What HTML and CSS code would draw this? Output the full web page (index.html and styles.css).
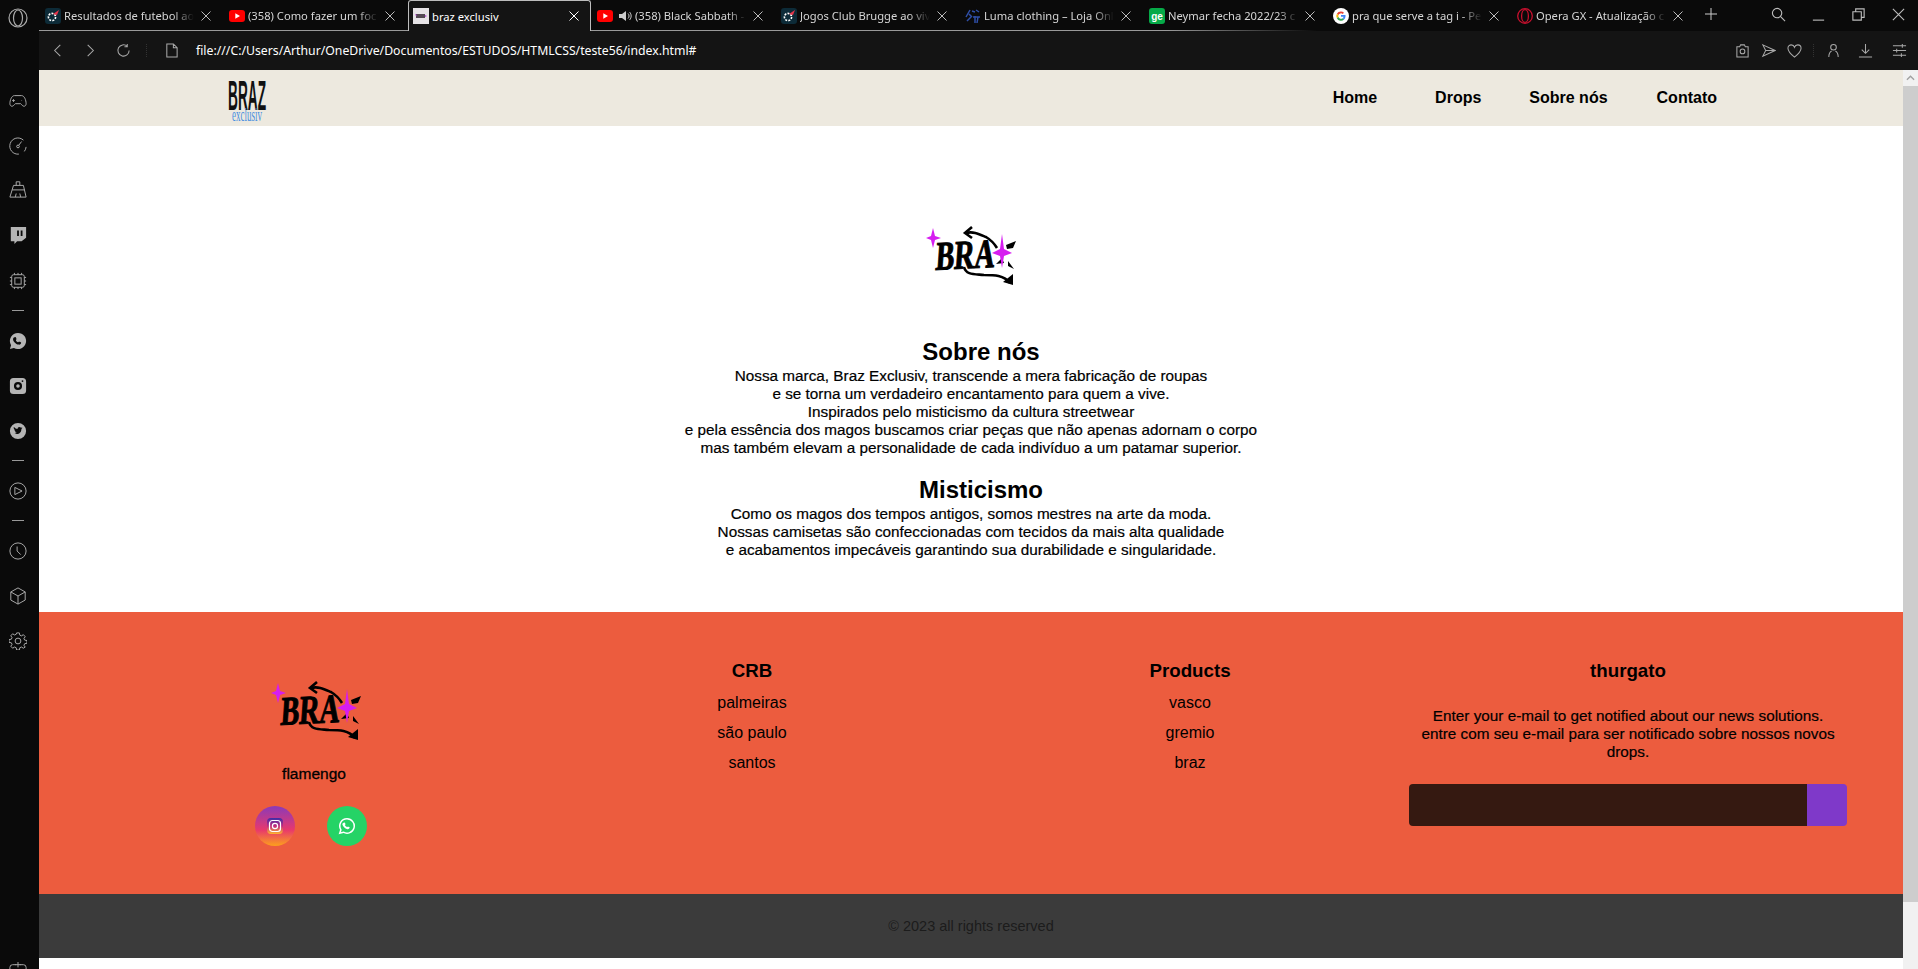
FILE: index.html
```html
<!DOCTYPE html>
<html lang="pt-BR">
<head>
    <meta charset="UTF-8">
    <meta name="viewport" content="width=device-width, initial-scale=1.0">
    <title>braz exclusiv</title>
    <link rel="stylesheet" href="styles.css">
</head>
<body>

    <svg class="defs" width="0" height="0">
        <defs>
            <linearGradient id="igFill" x1="0" y1="0" x2="0" y2="1">
                <stop offset="0" stop-color="#3b2fa8"/>
                <stop offset=".5" stop-color="#c02a80"/>
                <stop offset="1" stop-color="#ffb52e"/>
            </linearGradient>
        </defs>
        <symbol id="closeX" viewBox="0 0 10 10"><path d="M.5.5l9 9M9.500.5l-9 9"/></symbol>
        <symbol id="brazMark" viewBox="0 0 90 62">
            <g transform="translate(9 45) rotate(-3) skewX(-7) scale(1 1.500)">
                <text class="mark-text" x="0" y="0" textLength="59" lengthAdjust="spacingAndGlyphs">BRA</text>
            </g>
            <path d="M40 8 C47 6 53 9 60 12 C65 15 68 18 71 23" class="mark-line"/>
            <path d="M46 2 L39 8 L46 13" class="mark-line"/>
            <path d="M38 42 C40 50 48 49 58 50 C68 50 78 50 84 58" class="mark-line"/>
            <path d="M87 49 L87 60 L77 57 Z"/>
            <path d="M80 20 L90 16 L87 23 L81 24 Z M70 39 L76 33 L78 38 Z M82 36 L88 44 L82 41 Z"/>
            <path class="mark-star" d="M7 3 L9 11 L15 13 L9 15 L7 23 L5 15 L0 13 L5 11 Z"/>
            <path class="mark-star" d="M76 9 L78 24 L86 28 L78 31 L76 43 L74 31 L66 28 L74 24 Z"/>
        </symbol>
    </svg>

    <div class="tabstrip">
        <svg class="opera-logo" viewBox="0 0 20 20"><ellipse cx="10" cy="10" rx="9" ry="9"/><ellipse cx="10" cy="10" rx="4.500" ry="8"/></svg>
        <div class="tab">
            <svg class="favicon" viewBox="0 0 16 16"><rect width="16" height="16" rx="3" fill="#0d2b38"/><circle cx="7" cy="9" r="3.600" fill="none" stroke="#fff" stroke-width="1.600" stroke-dasharray="2 1.200"/><path d="M8 6l6-4-2 5z" fill="#e8344a"/></svg>
            <span class="tab-title">Resultados de futebol ao</span><svg class="tab-close"><use href="#closeX"/></svg>
        </div>
        <div class="tab">
            <svg class="favicon" viewBox="0 0 16 16"><rect y="2" width="16" height="12" rx="3" fill="#f00"/><path d="M6.300 5.200v5.600L11 8z" fill="#fff"/></svg>
            <span class="tab-title">(358) Como fazer um foc</span><svg class="tab-close"><use href="#closeX"/></svg>
        </div>
        <div class="tab tab-active">
            <svg class="favicon" viewBox="0 0 16 16"><rect width="16" height="16" fill="#e6e3e6"/><rect x="3" y="6" width="9" height="4" fill="#554a55"/><path d="M2 6l2 1-1 1zM12 7l2 1-2 1z" fill="#b23cd6"/></svg>
            <span class="tab-title">braz exclusiv</span><svg class="tab-close"><use href="#closeX"/></svg>
        </div>
        <div class="tab">
            <svg class="favicon" viewBox="0 0 16 16"><rect y="2" width="16" height="12" rx="3" fill="#f00"/><path d="M6.300 5.200v5.600L11 8z" fill="#fff"/></svg>
            <svg class="speaker" viewBox="0 0 14 14"><path d="M1 5h3l4-3v10L4 9H1z" fill="#ccc"/><path d="M10 4.500c1.400 1.400 1.400 3.600 0 5M11.500 3c2.200 2.200 2.200 5.800 0 8" fill="none" stroke="#ccc"/></svg>
            <span class="tab-title">(358) Black Sabbath -</span><svg class="tab-close"><use href="#closeX"/></svg>
        </div>
        <div class="tab">
            <svg class="favicon" viewBox="0 0 16 16"><rect width="16" height="16" rx="3" fill="#0d2b38"/><circle cx="7" cy="9" r="3.600" fill="none" stroke="#fff" stroke-width="1.600" stroke-dasharray="2 1.200"/><path d="M8 6l6-4-2 5z" fill="#e8344a"/></svg>
            <span class="tab-title">Jogos Club Brugge ao viv</span><svg class="tab-close"><use href="#closeX"/></svg>
        </div>
        <div class="tab">
            <svg class="favicon" viewBox="0 0 16 16"><path d="M1 9l4-7M4 6l3 3M7 3l3 1M11 2l3 2M8 9h7M10 8v7M13 9l-1 6M2 13l4-4" fill="none" stroke="#2f4fa8" stroke-width="1.500"/></svg>
            <span class="tab-title">Luma clothing – Loja Onl</span><svg class="tab-close"><use href="#closeX"/></svg>
        </div>
        <div class="tab">
            <svg class="favicon" viewBox="0 0 16 16"><rect width="16" height="16" rx="3" fill="#06aa48"/><text x="8" y="11.500" class="ge-text">ge</text></svg>
            <span class="tab-title">Neymar fecha 2022/23 c</span><svg class="tab-close"><use href="#closeX"/></svg>
        </div>
        <div class="tab">
            <svg class="favicon" viewBox="0 0 16 16"><circle cx="8" cy="8" r="8" fill="#fff"/><path d="M8 3.500a4.500 4.500 0 0 1 3 1.200L9.700 6A2.700 2.700 0 0 0 5.500 7L3.900 5.800A4.500 4.500 0 0 1 8 3.500z" fill="#ea4335"/><path d="M3.900 5.800L5.500 7a2.800 2.800 0 0 0 0 2L3.900 10.200a4.500 4.500 0 0 1 0-4.400z" fill="#fbbc05"/><path d="M3.900 10.200L5.500 9a2.700 2.700 0 0 0 4.100 1.300l1.500 1.200A4.500 4.500 0 0 1 3.900 10.200z" fill="#34a853"/><path d="M12.500 7H8v1.800h2.600a2.300 2.300 0 0 1-1 1.500l1.500 1.200C12 10.700 12.700 9 12.500 7z" fill="#4285f4"/></svg>
            <span class="tab-title">pra que serve a tag i - Pe</span><svg class="tab-close"><use href="#closeX"/></svg>
        </div>
        <div class="tab">
            <svg class="favicon" viewBox="0 0 16 16"><ellipse cx="8" cy="8" rx="7.300" ry="7.300" fill="none" stroke="#c9102e" stroke-width="1.300"/><ellipse cx="8" cy="8" rx="3.400" ry="6.400" fill="none" stroke="#c9102e" stroke-width="1.300"/></svg>
            <span class="tab-title">Opera GX - Atualização c</span><svg class="tab-close"><use href="#closeX"/></svg>
        </div>
        <svg class="new-tab" viewBox="0 0 12 12"><path d="M6 0v12M0 6h12"/></svg>
        <div class="window-btns">
            <svg class="win-search" viewBox="0 0 16 16"><circle cx="6.500" cy="6.500" r="5"/><path d="M10 10l5 5"/></svg>
            <svg class="win-min" viewBox="0 0 16 16"><path d="M2 14h12"/></svg>
            <svg class="win-restore" viewBox="0 0 16 16"><path d="M2 5h9v9H2zM5 5V2h9v9h-3"/></svg>
            <svg class="win-close" viewBox="0 0 16 16"><path d="M2 2l12 12M14 2L2 14"/></svg>
        </div>
    </div>

    <div class="workspace">
        <div class="sidebar">
            <div class="side-item"><svg viewBox="0 0 20 20"><path d="M6 4h8c3 0 5 5 5 9 0 3-3 4-5 1l-1-1H7l-1 1c-2 3-5 2-5-1 0-4 2-9 5-9zM5 8v3M3.500 9.500h3M14 9.500h.5"/></svg></div>
            <div class="side-item"><svg viewBox="0 0 20 20"><path d="M16 3.500A9 9 0 1 0 11 19M19 11a9 9 0 0 1-2 5M14 5l-3 4"/><circle cx="10" cy="10.500" r="1.500"/></svg></div>
            <div class="side-item side-broom"><svg viewBox="0 0 20 20"><path d="M8 6V2h4v4M5 6h11l3 13H1zM3.500 11h14M7 19l1-4M13 19l-1-4"/></svg></div>
            <div class="side-item side-twitch"><svg viewBox="0 0 20 20" class="side-fill"><path d="M2 1h17v12l-5 4H9l-3 3v-3H2zM9 5v6h2V5zM13 5v6h2V5z" fill-rule="evenodd"/></svg></div>
            <div class="side-item"><svg viewBox="0 0 20 20"><rect x="3" y="3" width="14" height="14" rx="2"/><rect x="6.500" y="6.500" width="7" height="7"/><path d="M6 1v2M10 1v2M14 1v2M6 17v2M10 17v2M14 17v2M1 6h2M1 10h2M1 14h2M17 6h2M17 10h2M17 14h2"/></svg></div>
            <div class="side-sep"></div>
            <div class="side-item"><svg viewBox="0 0 20 20" class="side-fill"><path d="M10 1a9 9 0 0 0-7.700 13.600L1 19l4.500-1.200A9 9 0 1 0 10 1zM7 5.500c1 0 1.500 2.500 1 3-.5.500-.5 1 .5 2s1.500 1 2 .5c.5-.5 3 0 3 1s-1 2.500-3 2c-3-.5-6-3.500-6-6 0-1.500 1.500-2.500 2.500-2.500z" fill-rule="evenodd"/></svg></div>
            <div class="side-item"><svg viewBox="0 0 20 20" class="side-fill"><path d="M5 1h10a4 4 0 0 1 4 4v10a4 4 0 0 1-4 4H5a4 4 0 0 1-4-4V5a4 4 0 0 1 4-4zM10 5.500a4.500 4.500 0 1 0 0 9 4.500 4.500 0 0 0 0-9zM10 8a2 2 0 1 1 0 4 2 2 0 0 1 0-4zM15 3.500a1 1 0 1 0 0 2 1 1 0 0 0 0-2z" fill-rule="evenodd"/></svg></div>
            <div class="side-item"><svg viewBox="0 0 20 20" class="side-fill"><path d="M10 1a9 9 0 1 0 0 18 9 9 0 0 0 0-18zM15 6.500l-1.200 1.300c0 4-3 6.700-7.800 5.200 1.200 0 2-.3 2.800-1-1 0-1.800-.5-2.300-1.500h1.200c-1.200-.4-1.800-1.300-1.900-2.400l1.100.3C5 7.500 4.900 6.300 5.500 5.500c1.200 1.400 2.500 2.100 4 2.200-.2-2 2.300-3 3.500-1.500z" fill-rule="evenodd"/></svg></div>
            <div class="side-sep"></div>
            <div class="side-item"><svg viewBox="0 0 20 20"><circle cx="10" cy="10" r="9"/><path d="M6.500 6l8 4-8 4z"/></svg></div>
            <div class="side-sep"></div>
            <div class="side-item"><svg viewBox="0 0 20 20"><circle cx="10" cy="10" r="9"/><path d="M9 5v5l4 4"/></svg></div>
            <div class="side-item"><svg viewBox="0 0 20 20"><path d="M10 1l8 4.500v9L10 19l-8-4.500v-9zM2 5.500l8 4.500 8-4.500M10 10v9"/></svg></div>
            <div class="side-item"><svg viewBox="0 0 20 20"><circle cx="10" cy="10" r="3.200"/><path d="M8.500 1h3l.5 2.500 1.800.8L16 3l2 2.200-1.400 2 .8 1.800 2.600.5v3l-2.600.5-.8 1.800 1.400 2L16 18l-2.200-1.300-1.800.8-.5 2.500h-3l-.5-2.500-1.800-.8L4 18l-2-2.200 1.400-2-.8-1.800L0 11.500v-3L2.600 8l.8-1.800-1.400-2L4 2l2.200 1.300L8 2.500z"/></svg></div>
            <div class="side-item side-last"><svg viewBox="0 0 20 20"><path d="M4 3h4M12 3h4a3 3 0 0 1 3 3v9H1V6a3 3 0 0 1 3-3M10 0v6M7 3h6M6 8v3M10 8v3M14 8v3"/></svg></div>
        </div>

        <div class="browser">
            <div class="toolbar">
                <svg class="tool-icon tool-back" viewBox="0 0 16 16"><path d="M11 2L5 8l6 6"/></svg>
                <svg class="tool-icon tool-forward" viewBox="0 0 16 16"><path d="M5 2l6 6-6 6"/></svg>
                <svg class="tool-icon tool-reload" viewBox="0 0 16 16"><path d="M14 8a6 6 0 1 1-2-4.500M12 1v3H9"/></svg>
                <span class="tool-dots tool-dots-left"></span>
                <svg class="tool-icon tool-doc" viewBox="0 0 16 16"><path d="M3 1h7l4 4v10H3zM10 1v4h4"/></svg>
                <span class="url">file:///C:/Users/Arthur/OneDrive/Documentos/ESTUDOS/HTMLCSS/teste56/index.html#</span>
                <div class="tool-right">
                    <svg class="tool-icon" viewBox="0 0 16 16"><path d="M2 4h3l1-2h4l1 2h3v11H2z"/><circle cx="8" cy="9" r="2.500"/></svg>
                    <svg class="tool-icon" viewBox="0 0 16 16"><path d="M2 2l13 6-13 6 3-6zM5 8h10"/></svg>
                    <svg class="tool-icon" viewBox="0 0 16 16"><path d="M8 15C3 11 1 8 1 5.500 1 3 3 2 4.500 2 6 2 7.500 3 8 4.500 8.500 3 10 2 11.500 2 13 2 15 3 15 5.500 15 8 13 11 8 15z"/></svg>
                    <span class="tool-dots"></span>
                    <svg class="tool-icon tool-person" viewBox="0 0 16 16"><circle cx="8" cy="4.500" r="3"/><path d="M3 15c0-4 2-6 3-6.500M13 15c0-4-2-6-3-6.500"/></svg>
                    <svg class="tool-icon tool-down" viewBox="0 0 16 16"><path d="M8 1v10M4 7l4 4 4-4M1 15h14"/></svg>
                    <svg class="tool-icon tool-sliders" viewBox="0 0 16 16"><path d="M1 3h14M1 8h14M1 13h14M11 1v4M5 6v4M10 11v4"/></svg>
                </div>
            </div>

            <div class="viewport">
                <div class="page">
                    <header class="site-header">
                        <svg class="site-logo" viewBox="0 0 38 49">
                            <text class="logo-braz" transform="translate(0 35) scale(1 2.700)" textLength="38" lengthAdjust="spacingAndGlyphs">BRAZ</text>
                            <text class="logo-exclusiv" transform="translate(4 46) scale(1 1.300)" textLength="30" lengthAdjust="spacingAndGlyphs">exclusiv</text>
                        </svg>
                        <nav class="site-nav">
                            <a href="#" class="nav-home">Home</a>
                            <a href="#" class="nav-drops">Drops</a>
                            <a href="#" class="nav-sobre">Sobre nós</a>
                            <a href="#">Contato</a>
                        </nav>
                    </header>

                    <main class="about">
                        <svg class="about-logo"><use href="#brazMark"/></svg>
                        <h2>Sobre nós</h2>
                        <p>Nossa marca, Braz Exclusiv, transcende a mera fabricação de roupas<br>
                        e se torna um verdadeiro encantamento para quem a vive.<br>
                        Inspirados pelo misticismo da cultura streetwear<br>
                        e pela essência dos magos buscamos criar peças que não apenas adornam o corpo<br>
                        mas também elevam a personalidade de cada indivíduo a um patamar superior.</p>
                        <h2 class="about-second">Misticismo</h2>
                        <p>Como os magos dos tempos antigos, somos mestres na arte da moda.<br>
                        Nossas camisetas são confeccionadas com tecidos da mais alta qualidade<br>
                        e acabamentos impecáveis garantindo sua durabilidade e singularidade.</p>
                    </main>

                    <footer class="site-footer">
                        <div class="footer-grid">
                            <div class="footer-brand">
                                <svg class="footer-logo"><use href="#brazMark"/></svg>
                                <p class="footer-name">flamengo</p>
                                <div class="social">
                                    <span class="social-btn social-ig">
                                        <svg viewBox="0 0 16 16"><rect x="0" y="0" width="16" height="16" rx="4" fill="url(#igFill)"/><rect x="2.500" y="2.500" width="11" height="11" rx="3" class="ig-inner"/><circle cx="8" cy="8" r="2.600" class="ig-inner"/></svg>
                                    </span>
                                    <span class="social-btn social-wa">
                                        <svg viewBox="0 0 20 20"><path d="M10 2a8 8 0 0 0-6.800 12.200L2 18l4-1.100A8 8 0 1 0 10 2z" class="wa-ring"/><path d="M7.200 6c.8 0 1.300 2 .9 2.500-.4.500-.4.800.6 1.800s1.300 1 1.800.6c.5-.4 2.500.1 2.500.9s-1 2-2.600 1.700c-2.700-.5-5.200-3-5.600-5.400C4.600 7 6.300 6 7.200 6z" class="wa-phone"/></svg>
                                    </span>
                                </div>
                            </div>
                            <div class="footer-col">
                                <h3>CRB</h3>
                                <ul>
                                    <li><a href="#">palmeiras</a></li>
                                    <li><a href="#">são paulo</a></li>
                                    <li><a href="#">santos</a></li>
                                </ul>
                            </div>
                            <div class="footer-col">
                                <h3>Products</h3>
                                <ul>
                                    <li><a href="#">vasco</a></li>
                                    <li><a href="#">gremio</a></li>
                                    <li><a href="#">braz</a></li>
                                </ul>
                            </div>
                            <div class="footer-col">
                                <h3>thurgato</h3>
                                <p class="footer-news">Enter your e-mail to get notified about our news solutions.<br>entre com seu e-mail para ser notificado sobre nossos novos drops.</p>
                                <form class="news-form">
                                    <input type="text" class="news-input">
                                    <button type="button" class="news-btn"></button>
                                </form>
                            </div>
                        </div>
                    </footer>

                    <div class="copyright">
                        <p>© 2023 all rights reserved</p>
                    </div>
                </div>

                <div class="scrollbar">
                    <div class="scroll-up"><svg viewBox="0 0 10 6"><path d="M1 5l4-4 4 4"/></svg></div>
                    <div class="scroll-thumb"></div>
                </div>
            </div>
        </div>
    </div>

</body>
</html>
```

FILE: styles.css
```css
* {
    box-sizing: border-box;
}
html, body {
    height: 100%;
}
body {
    margin: 0;
    overflow: hidden;
    background: #0a0a0a;
    font-family: "Liberation Sans", Arial, sans-serif;
    color: #000;
}
.defs {
    position: absolute;
}

/* browser chrome */
.tabstrip {
    display: flex;
    align-items: center;
    height: 31px;
    padding-left: 41px;
    background: #0a0a0a;
    position: relative;
}
.tabstrip::after {
    content: "";
    position: absolute;
    left: 39px;
    right: 0;
    bottom: 0;
    height: 1px;
    background: linear-gradient(90deg, #9a9a9a 0%, #9a9a9a 60%, #0a0a0a 68%);
}
.opera-logo {
    position: absolute;
    left: 8px;
    top: 8px;
    width: 20px;
    height: 20px;
    fill: none;
    stroke: #aaa;
    stroke-width: 1.2;
}
.tab {
    display: flex;
    align-items: center;
    flex: 0 0 184px;
    min-width: 0;
    height: 31px;
    padding-left: 4px;
    font-family: "Noto Sans", sans-serif;
    font-size: 11.200px;
    color: #d6d6d6;
}
.tab-active {
    position: relative;
    z-index: 1;
    flex-basis: 183px;
    margin: 0 2px 0 -1px;
    padding-left: 4px;
    background: #141414;
    color: #fff;
    border: 1px solid #bdbdbd;
    border-bottom: none;
    border-radius: 3px 3px 0 0;
}
.favicon {
    width: 16px;
    height: 16px;
    flex: none;
    margin-right: 3px;
}
.speaker {
    width: 14px;
    height: 14px;
    flex: none;
    margin: 0 3px 0 2px;
}
.ge-text {
    font: bold 10px "Liberation Sans", sans-serif;
    fill: #fff;
    text-anchor: middle;
}
.tab-title {
    flex: 1;
    min-width: 0;
    overflow: hidden;
    white-space: nowrap;
    -webkit-mask-image: linear-gradient(90deg, #000 84%, transparent 100%);
    mask-image: linear-gradient(90deg, #000 84%, transparent 100%);
}
.tab-active .tab-title {
    -webkit-mask-image: none;
    mask-image: none;
}
.tab-close {
    flex: none;
    width: 10px;
    height: 10px;
    margin: 0 14px 0 7px;
    fill: none;
    stroke: #bbb;
    stroke-width: 1;
}
.tab-active .tab-close {
    margin-right: 11px;
    stroke: #fff;
}
.new-tab {
    flex: none;
    width: 12px;
    height: 12px;
    margin: -4px 0 0 8px;
    fill: none;
    stroke: #ccc;
    stroke-width: 1;
}
.window-btns {
    margin-left: auto;
    display: flex;
    align-items: center;
    height: 31px;
    padding-right: 12px;
}
.window-btns svg {
    width: 15px;
    height: 15px;
    fill: none;
    stroke: #bbb;
    stroke-width: 1.2;
    margin-top: -2px;
    margin-left: 25px;
}

.workspace {
    display: flex;
    height: calc(100% - 31px);
}
.sidebar {
    flex: 0 0 39px;
    padding-top: 47px;
    padding-right: 3px;
    background: #0a0a0a;
    overflow: hidden;
}
.side-item {
    display: flex;
    align-items: center;
    justify-content: center;
    height: 45px;
}
.side-item svg {
    width: 18px;
    height: 18px;
    fill: none;
    stroke: #a8a8a8;
    stroke-width: 1.1;
}
.side-item svg.side-fill {
    fill: #b4b4b4;
    stroke: none;
}
.side-twitch svg {
    margin-top: -2px;
}
.side-broom svg {
    margin-top: -3px;
}
.side-last {
    margin-top: 285px;
}
.side-sep {
    width: 12px;
    height: 15px;
    margin: 0 auto;
    border-bottom: 1px solid #999;
    transform: translateY(-7px);
}

.browser {
    flex: 1;
    min-width: 0;
    display: flex;
    flex-direction: column;
}
.toolbar {
    display: flex;
    align-items: center;
    flex: 0 0 39px;
    background: #141414;
}
.tool-icon {
    width: 15px;
    height: 15px;
    flex: none;
    fill: none;
    stroke: #a9a9a9;
    stroke-width: 1.1;
}
.tool-back {
    margin-left: 11px;
}
.tool-forward {
    margin-left: 18px;
}
.tool-reload {
    margin-left: 18px;
}
.tool-dots {
    width: 1px;
    height: 13px;
    flex: none;
    border-left: 1px dotted #333;
}
.tool-dots-left {
    margin-left: 15px;
}
.tool-doc {
    margin-left: 17px;
}
.url {
    margin-left: 17px;
    font-family: "Noto Sans", sans-serif;
    font-size: 12.250px;
    color: #fff;
    white-space: nowrap;
}
.tool-right {
    margin-left: auto;
    display: flex;
    align-items: center;
    gap: 11px;
    padding-right: 11px;
}
.tool-person {
    margin-left: 1px;
}
.tool-down {
    margin-left: 6px;
}
.tool-sliders {
    margin-left: 8px;
}

.viewport {
    flex: 1;
    min-height: 0;
    display: flex;
}
.page {
    flex: 1;
    min-width: 0;
    background: #fff;
}
.scrollbar {
    flex: 0 0 15px;
    background: #f1f1f1;
}
.scroll-up {
    display: flex;
    align-items: center;
    justify-content: center;
    height: 16px;
}
.scroll-up svg {
    width: 9px;
    height: 6px;
    fill: none;
    stroke: #a0a0a0;
    stroke-width: 1.500;
}
.scroll-thumb {
    height: 816px;
    background: #cdcdcd;
}

/* site header */
.site-header {
    display: flex;
    align-items: center;
    justify-content: space-between;
    height: 56px;
    padding: 0 186px 0 189px;
    background: #ede9df;
}
.site-logo {
    width: 38px;
    height: 49px;
    margin-top: 3px;
    overflow: visible;
}
.logo-braz {
    font-family: "Liberation Sans", sans-serif;
    font-weight: bold;
    font-size: 16px;
    fill: #111;
}
.logo-exclusiv {
    font-family: "Liberation Serif", serif;
    font-size: 14px;
    fill: #4a90e0;
}
.site-nav {
    display: flex;
}
.site-nav a {
    font-weight: bold;
    font-size: 16px;
    color: #000;
    text-decoration: none;
}
.nav-home {
    margin-right: 58px;
}
.nav-drops {
    margin-right: 48px;
}
.nav-sobre {
    margin-right: 49px;
}

/* about */
.about {
    display: flex;
    flex-direction: column;
    align-items: center;
    height: 486px;
    padding-top: 99px;
    text-align: center;
}
.about-logo {
    width: 90px;
    height: 62px;
    margin-bottom: 51px;
}
.about h2 {
    margin: 0;
    padding-left: 20px;
    font-size: 24px;
    line-height: 28px;
}
.about p {
    margin: 1px 0 0;
    font-size: 15.300px;
    line-height: 18px;
    -webkit-text-stroke: .2px #000;
}
.about .about-second {
    margin-top: 19px;
}
.mark-text {
    font-family: "Liberation Serif", serif;
    font-weight: bold;
    font-size: 27px;
    fill: #000;
    stroke: #000;
    stroke-width: .7;
}
.mark-line {
    fill: none;
    stroke: #000;
    stroke-width: 2.600;
}
.mark-star {
    fill: #d61df0;
}

/* footer */
.site-footer {
    height: 282px;
    padding: 47px 56px 0;
    background: #ec5c3e;
}
.footer-grid {
    display: grid;
    grid-template-columns: repeat(4, 1fr);
    text-align: center;
}
.footer-brand {
    display: flex;
    flex-direction: column;
    align-items: center;
}
.footer-logo {
    width: 90px;
    height: 62px;
    margin-top: 21px;
    margin-left: 4px;
}
.footer-name {
    margin: 23px 0 0;
    font-size: 15.500px;
    line-height: 18px;
    -webkit-text-stroke: .3px #000;
}
.social {
    display: flex;
    gap: 32px;
    margin-top: 23px;
    margin-left: -6px;
}
.social-btn {
    display: flex;
    align-items: center;
    justify-content: center;
    width: 40px;
    height: 40px;
    border-radius: 50%;
}
.social-ig {
    background: linear-gradient(180deg, #8a3ab9 0%, #e8386c 60%, #fca01c 100%);
}
.social-wa {
    background: #25d366;
}
.social-ig svg {
    width: 16px;
    height: 16px;
}
.social-wa svg {
    width: 18px;
    height: 18px;
}
.ig-inner {
    fill: none;
    stroke: #fff;
    stroke-width: 1.200;
}
.wa-ring {
    fill: none;
    stroke: #fff;
    stroke-width: 1.700;
}
.wa-phone {
    fill: #fff;
}
.footer-col h3 {
    margin: 0;
    font-size: 18.720px;
    line-height: 23px;
}
.footer-col ul {
    margin: 6px 0 0;
    padding: 0;
    list-style: none;
}
.footer-col li {
    height: 30px;
    line-height: 30px;
    font-size: 16px;
}
.footer-col li a {
    color: #000;
    text-decoration: none;
}
.footer-news {
    margin: 25px 0 0;
    font-size: 15.300px;
    line-height: 18px;
    -webkit-text-stroke: .2px #000;
}
.news-form {
    display: flex;
    height: 42px;
    margin-top: 23px;
}
.news-input {
    flex: 1;
    min-width: 0;
    border: none;
    border-radius: 4px 0 0 4px;
    background: #351911;
}
.news-btn {
    width: 40px;
    border: none;
    border-radius: 0 4px 4px 0;
    background: #7f39c9;
}

.copyright {
    height: 64px;
    display: flex;
    align-items: center;
    justify-content: center;
    background: #3b3b3b;
}
.copyright p {
    margin: 0;
    font-size: 14.500px;
    color: #1c1c1c;
}
```
